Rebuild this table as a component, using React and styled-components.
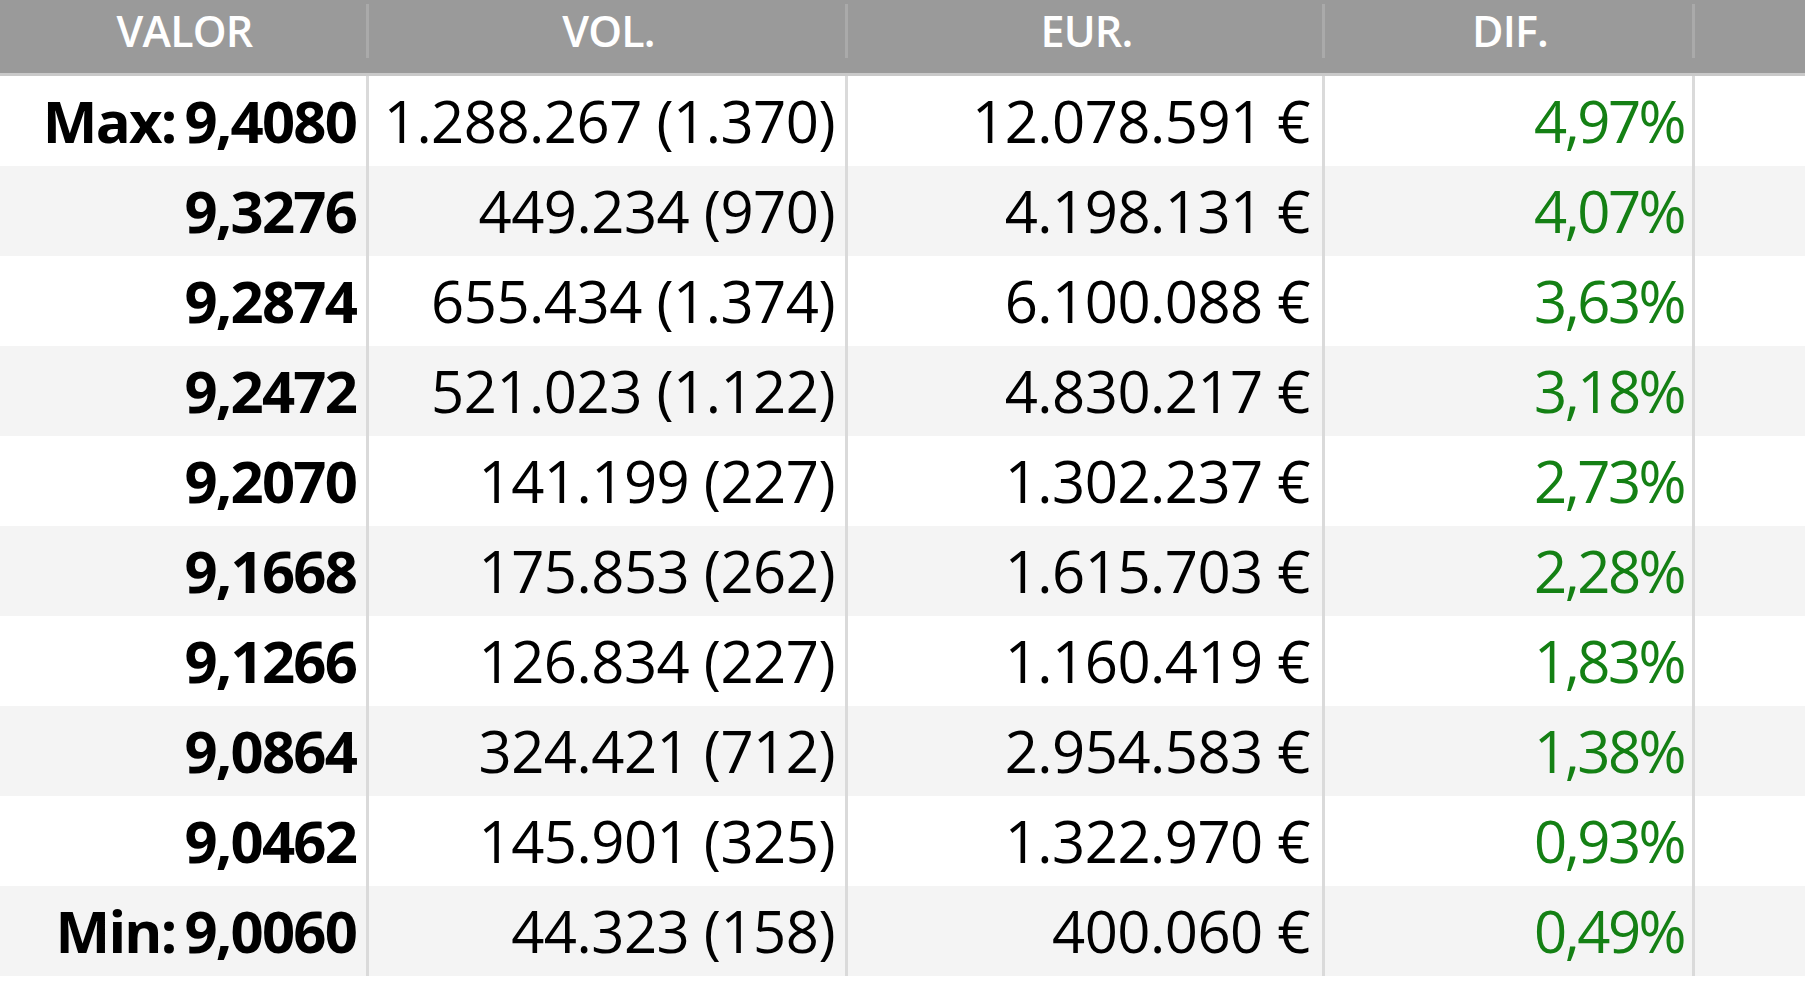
import React from 'react';
import styled, { createGlobalStyle } from 'styled-components';

const GlobalStyle = createGlobalStyle`
  html, body {
    margin: 0;
    padding: 0;
    background: #ffffff;
  }
  body {
    font-family: "Open Sans", "Noto Sans", sans-serif;
  }
`;

const columns = '369px 479px 477px 370px 1fr';

const Table = styled.div`
  width: 100%;
`;

const HeaderRow = styled.div`
  display: grid;
  grid-template-columns: ${columns};
  height: 73px;
  background: #9a9a9a;
  border-bottom: 3px solid #c9c9c9;
  box-sizing: content-box;
`;

const HeaderCell = styled.div`
  position: relative;
  display: flex;
  align-items: flex-start;
  justify-content: center;
  padding-top: 5px;
  color: #ffffff;
  font-size: 43px;
  font-weight: 600;
  letter-spacing: -0.8px;
  line-height: 52px;

  &::after {
    content: '';
    position: absolute;
    right: 0;
    top: 4px;
    height: 54px;
    width: 3px;
    background: ${p => (p.$last ? 'transparent' : '#aaaaaa')};
  }
`;

const Row = styled.div`
  display: grid;
  grid-template-columns: ${columns};
  height: 90px;
  background: ${p => (p.$odd ? '#f4f4f4' : '#ffffff')};
`;

const Cell = styled.div`
  display: flex;
  align-items: center;
  justify-content: flex-end;
  padding-right: ${p => p.$pad || 10}px;
  border-right: ${p => (p.$last ? 'none' : '3px solid #dadada')};
  font-size: 58px;
  line-height: 1;
  color: ${p => p.$color || '#000000'};
  font-weight: ${p => (p.$bold ? 700 : 400)};
  white-space: nowrap;
  letter-spacing: ${p => p.$spacing ?? -0.5}px;
`;

const Label = styled.span`
  margin-right: 9px;
`;

const rows = [
  { label: 'Max:', valor: '9,4080', vol: '1.288.267 (1.370)', eur: '12.078.591 €', dif: '4,97%' },
  { valor: '9,3276', vol: '449.234 (970)', eur: '4.198.131 €', dif: '4,07%' },
  { valor: '9,2874', vol: '655.434 (1.374)', eur: '6.100.088 €', dif: '3,63%' },
  { valor: '9,2472', vol: '521.023 (1.122)', eur: '4.830.217 €', dif: '3,18%' },
  { valor: '9,2070', vol: '141.199 (227)', eur: '1.302.237 €', dif: '2,73%' },
  { valor: '9,1668', vol: '175.853 (262)', eur: '1.615.703 €', dif: '2,28%' },
  { valor: '9,1266', vol: '126.834 (227)', eur: '1.160.419 €', dif: '1,83%' },
  { valor: '9,0864', vol: '324.421 (712)', eur: '2.954.583 €', dif: '1,38%' },
  { valor: '9,0462', vol: '145.901 (325)', eur: '1.322.970 €', dif: '0,93%' },
  { label: 'Min:', valor: '9,0060', vol: '44.323 (158)', eur: '400.060 €', dif: '0,49%' },
];

const headers = ['VALOR', 'VOL.', 'EUR.', 'DIF.'];

const App = () => {
  return (
    <>
      <GlobalStyle />
      <Table>
        <HeaderRow>
          {headers.map(h => (
            <HeaderCell key={h}>{h}</HeaderCell>
          ))}
          <HeaderCell $last />
        </HeaderRow>
        {rows.map((r, i) => (
          <Row key={r.valor} $odd={i % 2 === 1}>
            <Cell $bold $spacing={-1.8}>
              {r.label && <Label>{r.label}</Label>}
              {r.valor}
            </Cell>
            <Cell>{r.vol}</Cell>
            <Cell $pad={12}>{r.eur}</Cell>
            <Cell $color="#148014" $pad={8} $spacing={-2.5}>{r.dif}</Cell>
            <Cell $last />
          </Row>
        ))}
      </Table>
    </>
  );
};

export default App;
